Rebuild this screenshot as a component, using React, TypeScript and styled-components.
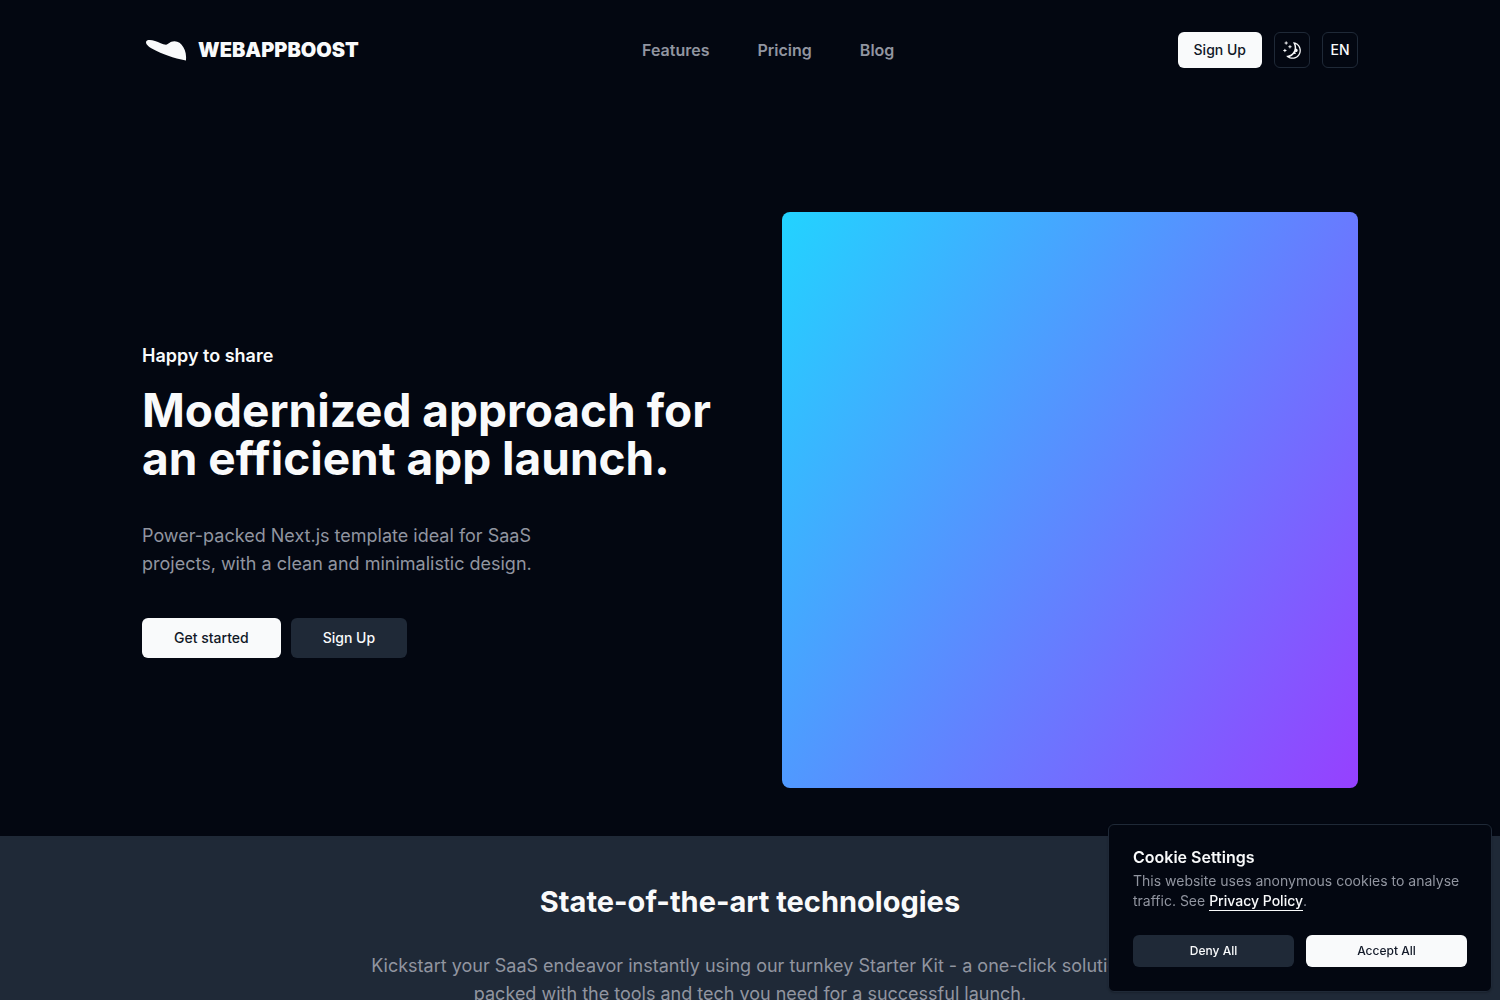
import React from "react";
import styled, { createGlobalStyle, css } from "styled-components";
import { RxMoon } from "react-icons/rx";

const color = {
  background: "#030711",
  foreground: "#f9fafb",
  muted: "#9195a0",
  surface: "#1f2937",
  ink: "#111827",
};

const GlobalStyle = createGlobalStyle`
  *, *::before, *::after { box-sizing: border-box; }
  body {
    margin: 0;
    background: ${color.background};
    color: ${color.foreground};
    font-family: Inter, "Liberation Sans", sans-serif;
    font-size: 16px;
    line-height: 24px;
    -webkit-font-smoothing: antialiased;
  }
  h1, h2, h3, p { margin: 0; }
`;

const container = css`
  width: 100%;
  max-width: 1280px;
  margin: 0 auto;
  padding-left: 32px;
  padding-right: 32px;
`;

const Header = styled.header`
  ${container}
  display: flex;
  align-items: center;
  justify-content: space-between;
  padding-top: 32px;
  padding-bottom: 32px;
`;

const Brand = styled.a`
  display: flex;
  align-items: center;
  gap: 8px;
  color: ${color.foreground};
  font-size: 20px;
  font-weight: 900;
  line-height: 28px;
  text-decoration: none;
`;

const Nav = styled.nav`
  display: flex;
  gap: 48px;
`;

const NavLink = styled.a`
  color: ${color.muted};
  font-weight: 600;
  text-decoration: none;
`;

const Actions = styled.div`
  display: flex;
  gap: 12px;
`;

type ButtonProps = {
  $tone?: "light" | "dark" | "outline";
  $size?: "small" | "medium" | "large" | "square";
};

const tones = {
  light: css`
    background: ${color.foreground};
    color: ${color.ink};
  `,
  dark: css`
    background: ${color.surface};
    color: ${color.foreground};
  `,
  outline: css`
    background: transparent;
    border: 1px solid ${color.surface};
    color: ${color.foreground};
  `,
};

const sizes = {
  small: css`
    flex: 1;
    height: 32px;
    padding: 0 12px;
    font-size: 12px;
  `,
  medium: css`
    height: 36px;
    padding: 0 16px;
  `,
  large: css`
    height: 40px;
    padding: 0 32px;
  `,
  square: css`
    width: 36px;
    height: 36px;
    padding: 0;
  `,
};

const Button = styled.button<ButtonProps>`
  display: inline-flex;
  align-items: center;
  justify-content: center;
  border: 0;
  border-radius: 6px;
  font-family: inherit;
  font-size: 14px;
  font-weight: 500;
  line-height: 20px;
  white-space: nowrap;
  cursor: pointer;
  ${({ $tone = "light" }) => tones[$tone]}
  ${({ $size = "medium" }) => sizes[$size]}
`;

const Hero = styled.section`
  ${container}
  display: grid;
  grid-template-columns: 1fr 1fr;
  align-items: center;
  gap: 64px;
  margin-top: 64px;
  padding-top: 48px;
  padding-bottom: 48px;
`;

const HeroCopy = styled.div`
  display: flex;
  flex-direction: column;
  gap: 40px;
`;

const Headline = styled.div`
  display: flex;
  flex-direction: column;
  gap: 16px;
`;

const Eyebrow = styled.p`
  font-size: 18px;
  font-weight: 600;
  line-height: 28px;
`;

const HeroTitle = styled.h1`
  font-size: 46px;
  font-weight: 700;
  line-height: 48px;
`;

const Lead = styled.p<{ $width: number }>`
  max-width: ${({ $width }) => $width}px;
  color: ${color.muted};
  font-size: 18px;
  line-height: 28px;
`;

const ButtonRow = styled.div<{ $gap: number }>`
  display: flex;
  gap: ${({ $gap }) => $gap}px;
`;

const HeroArt = styled.div`
  aspect-ratio: 1;
  border-radius: 8px;
  background: linear-gradient(123deg, #22d3ff, #9640ff);
`;

const Tech = styled.section`
  display: flex;
  flex-direction: column;
  align-items: center;
  gap: 32px;
  padding: 48px 32px;
  background: ${color.surface};
  text-align: center;
`;

const TechTitle = styled.h2`
  font-size: 29px;
  font-weight: 700;
  line-height: 36px;
`;

const CookieCard = styled.aside`
  position: fixed;
  right: 8px;
  bottom: 8px;
  width: 384px;
  max-width: calc(100% - 16px);
  padding: 24px;
  border: 1px solid ${color.surface};
  border-radius: 6px;
  background: ${color.background};
  box-shadow: 0 1px 2px rgba(0, 0, 0, 0.2);
`;

const CookieTitle = styled.h3`
  margin-bottom: 6px;
  font-size: 16px;
  font-weight: 600;
  line-height: 16px;
`;

const CookieText = styled.p`
  margin-bottom: 24px;
  color: ${color.muted};
  font-size: 14px;
  line-height: 20px;
`;

const PolicyLink = styled.a`
  padding-bottom: 1px;
  border-bottom: 1px solid ${color.foreground};
  color: ${color.foreground};
  font-weight: 500;
  text-decoration: none;
`;

const Logo = () => (
  <svg width="48" height="36" viewBox="0 0 48 36" fill="currentColor" aria-hidden="true">
    <path d="M4 10.2C4 7.4 8.8 7.6 13 8.9C17 10.1 20.5 12.6 24 12.7C26.5 12.4 27.6 9.4 32.4 9.2C39.6 9 45.2 18.4 44 28.6C31.5 26.2 20 22 11.2 17.3C7.5 15.3 4 12.8 4 10.2Z" />
  </svg>
);

export default function App() {
  return (
    <>
      <GlobalStyle />
      <Header>
        <Brand href="#">
          <Logo />
          WEBAPPBOOST
        </Brand>
        <Nav aria-label="Main">
          <NavLink href="#features">Features</NavLink>
          <NavLink href="#pricing">Pricing</NavLink>
          <NavLink href="#blog">Blog</NavLink>
        </Nav>
        <Actions>
          <Button>Sign Up</Button>
          <Button $tone="outline" $size="square" aria-label="Toggle theme">
            <RxMoon size={19} />
          </Button>
          <Button $tone="outline" $size="square">EN</Button>
        </Actions>
      </Header>
      <main>
        <Hero>
          <HeroCopy>
            <Headline>
              <Eyebrow>Happy to share</Eyebrow>
              <HeroTitle>Modernized approach for an efficient app launch.</HeroTitle>
            </Headline>
            <Lead $width={448}>
              Power-packed Next.js template ideal for SaaS projects, with a clean and minimalistic design.
            </Lead>
            <ButtonRow $gap={10}>
              <Button $size="large">Get started</Button>
              <Button $size="large" $tone="dark">Sign Up</Button>
            </ButtonRow>
          </HeroCopy>
          <HeroArt />
        </Hero>
        <Tech>
          <TechTitle>State-of-the-art technologies</TechTitle>
          <Lead $width={768}>
            Kickstart your SaaS endeavor instantly using our turnkey Starter Kit - a one-click solution packed with the
            tools and tech you need for a successful launch.
          </Lead>
        </Tech>
      </main>
      <CookieCard aria-label="Cookie Settings">
        <CookieTitle>Cookie Settings</CookieTitle>
        <CookieText>
          This website uses anonymous cookies to analyse traffic. See <PolicyLink href="#privacy">Privacy Policy</PolicyLink>.
        </CookieText>
        <ButtonRow $gap={12}>
          <Button $size="small" $tone="dark">Deny All</Button>
          <Button $size="small">Accept All</Button>
        </ButtonRow>
      </CookieCard>
    </>
  );
}
